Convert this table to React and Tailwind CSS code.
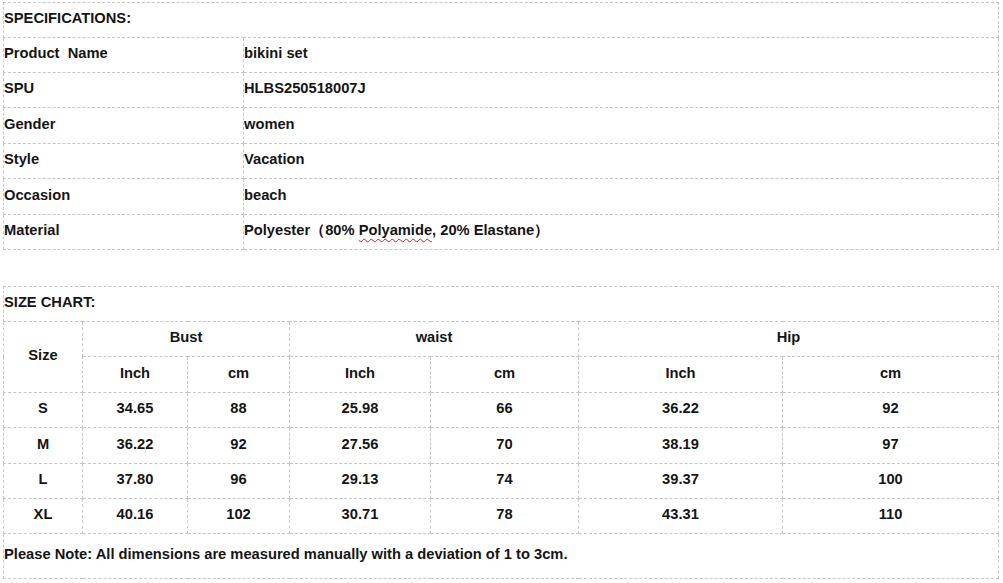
import React from 'react';

const specs = [
  ['Product\u00a0 Name', 'bikini set'],
  ['SPU', 'HLBS250518007J'],
  ['Gender', 'women'],
  ['Style', 'Vacation'],
  ['Occasion', 'beach'],
];

const sizes = [
  ['S', '34.65', '88', '25.98', '66', '36.22', '92'],
  ['M', '36.22', '92', '27.56', '70', '38.19', '97'],
  ['L', '37.80', '96', '29.13', '74', '39.37', '100'],
  ['XL', '40.16', '102', '30.71', '78', '43.31', '110'],
];

const cell = 'border border-dashed border-[#c6c6c6] p-0 pb-[3px]';

export default function App() {
  return (
    <div className="bg-white w-[1003px] h-[583px] pt-[2px] pl-[3px] font-['Liberation_Sans',Arial,sans-serif] text-[14.7px] font-bold text-[#151515] leading-none">
      {/* Specifications */}
      <table className="table-fixed border-collapse w-[996px]">
        <colgroup>
          <col className="w-[240px]" />
          <col />
        </colgroup>
        <tbody>
          <tr className="h-[35px]">
            <td colSpan={2} className={cell}>SPECIFICATIONS:</td>
          </tr>
          {specs.map(([k, v], i) => (
            <tr key={k} className={i === 2 || i === 4 ? 'h-[36px]' : 'h-[35px]'}>
              <td className={cell}>{k}</td>
              <td className={cell}>{v}</td>
            </tr>
          ))}
          <tr className="h-[35px]">
            <td className={cell}>Material</td>
            <td className={cell}>
              Polyester（80%{' '}
              <span className="underline decoration-wavy decoration-[#e01818] decoration-1 underline-offset-[3px]">Polyamide</span>
              , 20% Elastane）
            </td>
          </tr>
        </tbody>
      </table>

      {/* Size chart */}
      <table className="table-fixed border-collapse w-[996px] mt-[36px] text-center">
        <colgroup>
          <col className="w-[79px]" />
          <col className="w-[105px]" />
          <col className="w-[102px]" />
          <col className="w-[141px]" />
          <col className="w-[148px]" />
          <col className="w-[204px]" />
          <col />
        </colgroup>
        <tbody>
          <tr className="h-[35px]">
            <td colSpan={7} className={`${cell} text-left`}>SIZE CHART:</td>
          </tr>
          <tr className="h-[35px]">
            <td rowSpan={2} className={cell}>Size</td>
            <td colSpan={2} className={cell}>Bust</td>
            <td colSpan={2} className={cell}>waist</td>
            <td colSpan={2} className={cell}>Hip</td>
          </tr>
          <tr className="h-[36px]">
            <td className={cell}>Inch</td>
            <td className={cell}>cm</td>
            <td className={cell}>Inch</td>
            <td className={cell}>cm</td>
            <td className={cell}>Inch</td>
            <td className={cell}>cm</td>
          </tr>
          {sizes.map((row, i) => (
            <tr key={row[0]} className={i === 1 ? 'h-[36px]' : 'h-[35px]'}>
              {row.map((v, j) => (
                <td key={j} className={cell}>{v}</td>
              ))}
            </tr>
          ))}
          <tr className="h-[45px]">
            <td colSpan={7} className={`${cell} text-left`}>
              Please Note: All dimensions are measured manually with a deviation of 1 to 3cm.
            </td>
          </tr>
        </tbody>
      </table>
    </div>
  );
}
